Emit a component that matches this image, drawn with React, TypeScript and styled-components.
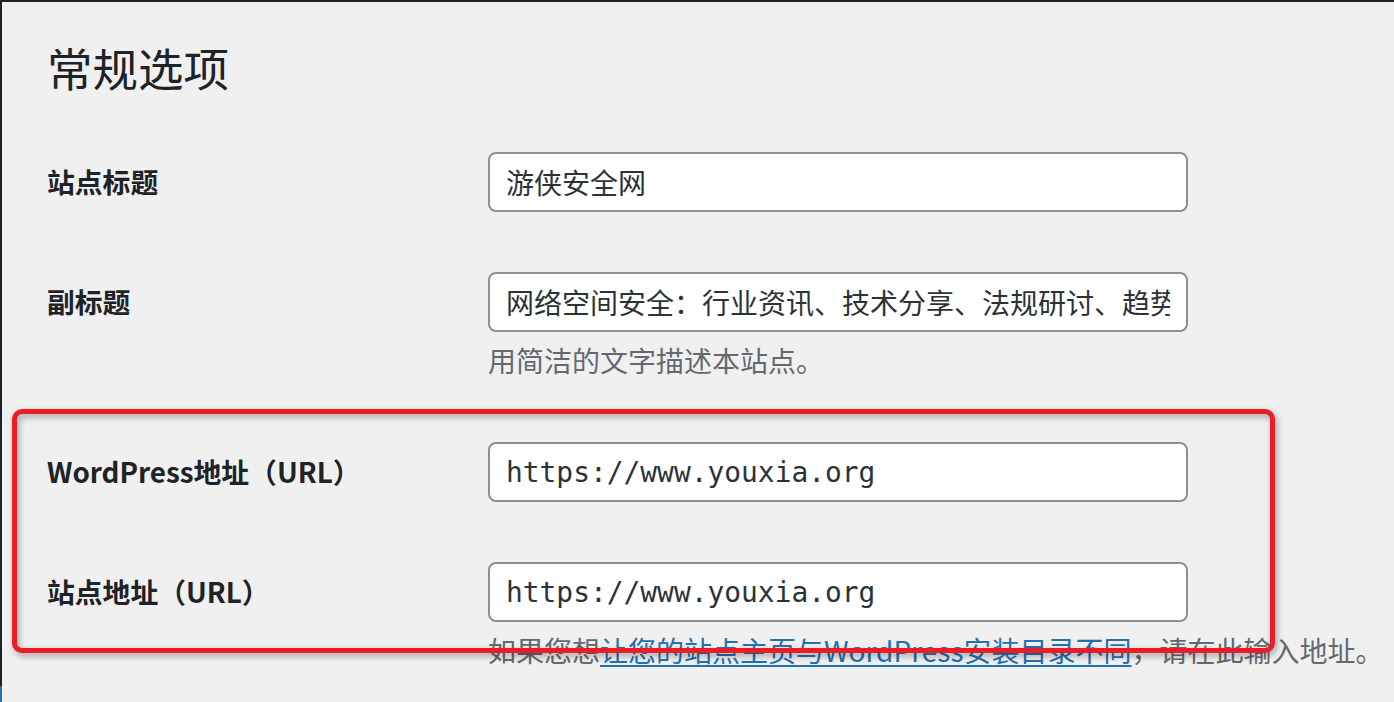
import React from "react";
import styled, { createGlobalStyle } from "styled-components";

const GlobalStyle = createGlobalStyle`
  html, body {
    margin: 0;
    padding: 0;
    background: #f0f0f1;
  }
  body {
    font-family: "Noto Sans CJK SC", "Noto Sans", sans-serif;
    color: #1d2327;
  }
`;

const Frame = styled.div`
  position: relative;
  width: 1394px;
  height: 702px;
  overflow: hidden;
  display: flex;
  flex-direction: column;
  background: #f0f0f1;
`;

const TopBar = styled.div`
  height: 2px;
  flex: 0 0 2px;
  background: #1d2327;
`;

const Body = styled.div`
  flex: 1;
  display: flex;
`;

const SideEdge = styled.div`
  width: 2px;
  flex: 0 0 2px;
  background: linear-gradient(to bottom, #1d2327 684px, #2271b1 684px);
`;

const Content = styled.main`
  flex: 1;
  padding: 36px 0 0 45px;
`;

const Heading = styled.h1`
  margin: 0 0 25px;
  font-size: 45.5px;
  line-height: 59px;
  font-weight: 400;
  color: #1d2327;
`;

const FormTable = styled.table`
  border-collapse: collapse;
  border-spacing: 0;
  table-layout: fixed;
  width: 1161px;
`;

const Label = styled.th`
  width: 400px;
  padding: 38px 21px 40px 0;
  text-align: left;
  vertical-align: top;
  font-size: 27.8px;
  line-height: 42px;
  font-weight: 700;
  color: #1d2327;
  white-space: nowrap;
`;

const Field = styled.td`
  padding: 30px 20px;
  vertical-align: top;
`;

const TextInput = styled.input<{ $mono?: boolean }>`
  display: block;
  box-sizing: border-box;
  width: 700px;
  height: 60px;
  margin: 0;
  padding: 0 16px;
  border: 2px solid #8c8f94;
  border-radius: 8px;
  background: #fff;
  color: #2c3338;
  font-family: ${(p) =>
    p.$mono
      ? `"DejaVu Sans Mono", "Liberation Mono", monospace`
      : `"Noto Sans CJK SC", "Noto Sans", sans-serif`};
  font-size: ${(p) => (p.$mono ? "27.9px" : "28px")};
  outline: none;
`;

const Description = styled.p`
  margin: 7px 0 0;
  font-size: 28px;
  line-height: 43px;
  color: #646970;
  white-space: nowrap;
`;

const DocLink = styled.a`
  color: #2271b1;
  text-decoration: underline;
  text-decoration-thickness: 2px;
  text-underline-offset: 3px;
`;

const Highlight = styled.div`
  position: absolute;
  left: 12px;
  top: 409px;
  width: 1263px;
  height: 244px;
  box-sizing: border-box;
  border: 5px solid #ea1c24;
  border-radius: 10px;
  filter: drop-shadow(2px 3px 3px rgba(0, 0, 0, 0.35));
  pointer-events: none;
`;

export default function App() {
  return (
    <>
      <GlobalStyle />
      <Frame>
        <TopBar />
        <Body>
          <SideEdge />
          <Content>
            <Heading>常规选项</Heading>
            <FormTable>
              <tbody>
                <tr>
                  <Label scope="row">站点标题</Label>
                  <Field>
                    <TextInput readOnly value="游侠安全网" />
                  </Field>
                </tr>
                <tr>
                  <Label scope="row">副标题</Label>
                  <Field>
                    <TextInput
                      readOnly
                      value="网络空间安全：行业资讯、技术分享、法规研讨、趋势分析"
                    />
                    <Description>用简洁的文字描述本站点。</Description>
                  </Field>
                </tr>
                <tr>
                  <Label scope="row">WordPress地址（URL）</Label>
                  <Field>
                    <TextInput $mono readOnly value="https://www.youxia.org" />
                  </Field>
                </tr>
                <tr>
                  <Label scope="row">站点地址（URL）</Label>
                  <Field>
                    <TextInput $mono readOnly value="https://www.youxia.org" />
                    <Description>
                      如果您想
                      <DocLink href="#">让您的站点主页与WordPress安装目录不同</DocLink>
                      ，请在此输入地址。
                    </Description>
                  </Field>
                </tr>
              </tbody>
            </FormTable>
          </Content>
        </Body>
        <Highlight />
      </Frame>
    </>
  );
}
